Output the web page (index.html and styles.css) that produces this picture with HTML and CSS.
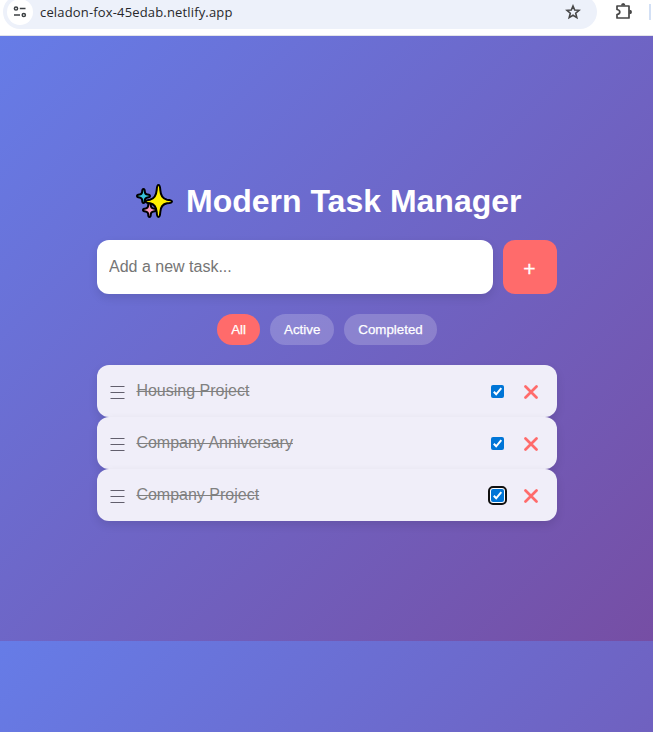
FILE: index.html
```
<!DOCTYPE html>
<html lang="en">
<head>
<meta charset="utf-8">
<title>Modern Task Manager</title>
<link rel="stylesheet" href="styles.css">
</head>
<body>
<header class="toolbar">
  <div class="address">
    <span class="site-info">
      <svg width="14" height="14" viewBox="0 0 14 14" fill="none" stroke="#3c4043" stroke-width="1.5"><circle cx="3" cy="3.5" r="1.6"/><path d="M6.8 3.5H12.5M1 10H7"/><circle cx="10.8" cy="10" r="1.6"/></svg>
    </span>
    <span class="url">celadon-fox-45edab.netlify.app</span>
    <svg class="star" width="16" height="16" viewBox="0 0 16 16" fill="none" stroke="#474747" stroke-width="1.6" stroke-linejoin="miter"><path d="M8 2L9.7 6L14 6.3L10.7 9.2L11.8 13.6L8 11.2L4.2 13.6L5.3 9.2L2 6.3L6.3 6Z"/></svg>
  </div>
  <svg class="puzzle" width="18" height="18" viewBox="0 0 18 18"><path d="M2 4H14V16H2V12.5Q4.8 12 4.8 10T2 7.5Z" fill="none" stroke="#474747" stroke-width="1.7" stroke-linejoin="round"/><path d="M6 3.6Q6 1 8.2 1T10.4 3.6ZM14.4 7.8Q17 7.8 17 10T14.4 12.2Z" fill="#474747"/></svg>
  <span class="divider"></span>
</header>
<main class="page">
  <h1 class="title">
    <svg class="sparkles" width="38" height="38" viewBox="0 0 38 38" stroke="#000" stroke-width="2" stroke-linejoin="round">
      <path fill="#38c5dc" d="M7.5 6Q8.8 6 8.8 8.5Q9 11.5 11.5 11.6Q14 11.8 14 13T11.5 14.4Q9 14.7 8.8 17.2Q8.8 20 7.5 20T6.2 17.2Q6 14.7 3.5 14.4Q1 14.2 1 13T3.5 11.6Q6 11.5 6.2 8.5Q6.2 6 7.5 6Z"/>
      <path fill="#f59ac0" d="M13.5 20Q14.8 20 14.8 22.5Q15 25.3 17.5 25.6Q20 25.8 20 27T17.5 28.4Q15 28.7 14.8 31.2Q14.8 34 13.5 34T12.2 31.2Q12 28.7 9.5 28.4Q7 28.2 7 27T9.5 25.6Q12 25.3 12.2 22.5Q12.2 20 13.5 20Z"/>
      <path fill="#fff100" d="M22.5 2Q24 2 24.3 7Q24.8 15.5 31 16.7Q36 17 36 18.5T31 20.3Q24.8 21.5 24.3 29Q24 34 22.5 34T20.7 29Q20 21.5 14 20.3Q9.5 19.8 9.5 18.5T14 16.7Q20 15.5 20.7 7Q21 2 22.5 2Z"/>
    </svg>
    <span>Modern Task Manager</span>
  </h1>
  <div class="entry">
    <input class="task-input" type="text" placeholder="Add a new task...">
    <button class="add">+</button>
  </div>
  <nav class="filters">
    <button class="filter active">All</button>
    <button class="filter">Active</button>
    <button class="filter">Completed</button>
  </nav>
  <ul class="tasks">
    <li class="task">
      <svg class="handle" width="15" height="14" viewBox="0 0 15 14"><path d="M.5 .5H14.5M.5 6.5H14.5M.5 12.5H14.5"/></svg>
      <span class="name">Housing Project</span>
      <span class="check"><svg width="13" height="13" viewBox="0 0 13 13"><path d="M2.8 6.7L5.2 9.3L10.3 3.2"/></svg></span>
      <svg class="remove" width="14" height="14" viewBox="0 0 14 14"><path d="M1.5 1.5L12.5 12.5M12.5 1.5L1.5 12.5"/></svg>
    </li>
    <li class="task">
      <svg class="handle" width="15" height="14" viewBox="0 0 15 14"><path d="M.5 .5H14.5M.5 6.5H14.5M.5 12.5H14.5"/></svg>
      <span class="name">Company Anniversary</span>
      <span class="check"><svg width="13" height="13" viewBox="0 0 13 13"><path d="M2.8 6.7L5.2 9.3L10.3 3.2"/></svg></span>
      <svg class="remove" width="14" height="14" viewBox="0 0 14 14"><path d="M1.5 1.5L12.5 12.5M12.5 1.5L1.5 12.5"/></svg>
    </li>
    <li class="task">
      <svg class="handle" width="15" height="14" viewBox="0 0 15 14"><path d="M.5 .5H14.5M.5 6.5H14.5M.5 12.5H14.5"/></svg>
      <span class="name">Company Project</span>
      <span class="check focused"><svg width="13" height="13" viewBox="0 0 13 13"><path d="M2.8 6.7L5.2 9.3L10.3 3.2"/></svg></span>
      <svg class="remove" width="14" height="14" viewBox="0 0 14 14"><path d="M1.5 1.5L12.5 12.5M12.5 1.5L1.5 12.5"/></svg>
    </li>
  </ul>
</main>
</body>
</html>
```
FILE: styles.css
```
* { box-sizing: border-box; }
body {
  margin: 0;
  height: 732px;
  overflow: hidden;
  display: flex;
  flex-direction: column;
  font-family: "Liberation Sans", Arial, sans-serif;
}
.toolbar {
  flex: none;
  display: flex;
  height: 36px;
  border-bottom: 1px solid #e3e4ea;
  background: #fff;
}
.address {
  display: flex;
  align-items: center;
  width: 594px;
  height: 34px;
  margin: -5px 0 0 3px;
  padding: 0 16px 0 4px;
  border-radius: 17px;
  background: #edf1fa;
}
.site-info {
  display: grid;
  place-items: center;
  width: 26px;
  height: 26px;
  border-radius: 50%;
  background: #fff;
}
.url {
  margin-left: 7px;
  font: 13px/18px "Open Sans", "Noto Sans", sans-serif;
  letter-spacing: .16px;
  color: #27282b;
  white-space: nowrap;
}
.star { margin-left: auto; }
.puzzle { margin: 2px 0 0 18px; }
.divider {
  width: 2px;
  height: 16px;
  margin: 4px 0 0 16px;
  background: #d3e0f5;
}
.page {
  flex: 1;
  display: flex;
  flex-direction: column;
  align-items: center;
  padding: 146px 0 0 1px;
  background: linear-gradient(135deg, #667ce7, #764ea4) 0 0 / 100% 605px repeat-y;
}
.title {
  display: flex;
  align-items: center;
  gap: 12px;
  width: 382px;
  height: 39px;
  margin: 0 0 19px;
  color: #fff;
  font-size: 32px;
  line-height: 39px;
  white-space: nowrap;
}
.sparkles { flex: none; }
.entry {
  display: flex;
  gap: 10px;
  width: 460px;
  height: 54px;
}
.task-input {
  flex: 1;
  min-width: 0;
  padding: 0 12px;
  border: 0;
  border-radius: 12px;
  background: #fff;
  box-shadow: 0 4px 10px rgba(0, 0, 0, .1);
  font: 16px "Liberation Sans", Arial, sans-serif;
}
.task-input::placeholder { color: #757575; }
.add {
  width: 54px;
  padding: 4px 1px 0 0;
  border: 0;
  border-radius: 12px;
  background: #ff6b6b;
  color: #fff;
  font: 21px "Liberation Sans", Arial, sans-serif;
  -webkit-text-stroke: .3px #fff;
}
.filters {
  display: flex;
  gap: 10px;
  margin: 20px 0;
}
.filter {
  height: 31px;
  padding: 0 14px;
  border: 0;
  border-radius: 16px;
  background: rgba(255, 255, 255, .2);
  color: #fff;
  font: 13.333px "Liberation Sans", Arial, sans-serif;
  -webkit-text-stroke: .25px #fff;
}
.filter.active { background: #ff6b6b; }
.tasks {
  width: 460px;
  margin: 0;
  padding: 0;
  list-style: none;
}
.task {
  display: flex;
  align-items: center;
  height: 52px;
  padding: 0 19px 0 13px;
  border-radius: 12px;
  background: #f0eef9;
  box-shadow: 0 4px 10px rgba(0, 0, 0, .1);
}
.handle {
  margin-top: 4px;
  fill: none;
  stroke: #625f6d;
  stroke-width: 1.2;
}
.name {
  flex: 1;
  margin-left: 11.4px;
  color: #808080;
  font-size: 16px;
  line-height: 20px;
  text-decoration: line-through;
}
.check {
  width: 13px;
  height: 13px;
  margin-top: 1px;
  border-radius: 2px;
  background: #0075d7;
}
.check svg {
  display: block;
  fill: none;
  stroke: #fff;
  stroke-width: 2;
}
.check.focused {
  outline: 2px solid #101010;
  outline-offset: 1px;
  box-shadow: 0 0 0 1px #fff;
}
.remove {
  margin: 2px 0 0 20px;
  fill: none;
  stroke: #ff6b6b;
  stroke-width: 2.7;
  stroke-linecap: round;
}
```
